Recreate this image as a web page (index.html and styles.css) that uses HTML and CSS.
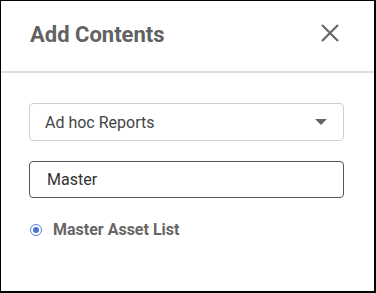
FILE: index.html
```html
<!DOCTYPE html>
<html lang="en">
<head>
    <meta charset="UTF-8">
    <title>Add Contents</title>
    <link rel="stylesheet" href="styles.css">
</head>
<body>
    <div class="dialog">
        <div class="dialog-header">
            <h2 class="dialog-title">Add Contents</h2>
            <button class="close-button" aria-label="Close">
                <svg width="20" height="20" viewBox="0 0 20 20">
                    <path d="M2 2 L18 18 M18 2 L2 18" stroke="#666" stroke-width="2.2" fill="none"/>
                </svg>
            </button>
        </div>
        <div class="dialog-body">
            <div class="select-box">
                <span class="select-text">Ad hoc Reports</span>
                <span class="caret"></span>
            </div>
            <div class="search-box">
                <span class="search-text">Master</span>
            </div>
            <label class="radio-row">
                <span class="radio"><span class="radio-dot"></span></span>
                <span class="radio-label">Master Asset List</span>
            </label>
        </div>
    </div>
</body>
</html>
```

FILE: styles.css
```css
body {
    margin: 0;
    font-family: Roboto, 'Liberation Sans', sans-serif;
    background: #fff;
}

.dialog {
    width: 376px;
    height: 293px;
    box-sizing: border-box;
    border-top: 1px solid #000;
    border-left: 1px solid #000;
    border-right: 2px solid #000;
    border-bottom: 2px solid #000;
    background: #fff;
}

.dialog-header {
    height: 66px;
    display: flex;
    align-items: center;
    justify-content: space-between;
    padding: 0 34px 4px 29px;
    border-bottom: 2px solid #dedede;
}

.dialog-title {
    margin: 0;
    font-size: 22px;
    font-weight: bold;
    color: #626262;
}

.close-button {
    background: none;
    border: none;
    padding: 0;
    width: 20px;
    height: 20px;
    margin-bottom: 3px;
    cursor: pointer;
}

.dialog-body {
    padding: 30px 30px 0 28px;
}

.select-box {
    height: 38px;
    box-sizing: border-box;
    border: 1px solid #cfcfcf;
    border-radius: 4px;
    display: flex;
    align-items: center;
    justify-content: space-between;
    padding: 0 16px 0 15px;
}

.select-text {
    font-size: 16px;
    color: #444;
}

.caret {
    width: 0;
    height: 0;
    border-left: 6px solid transparent;
    border-right: 6px solid transparent;
    border-top: 6px solid #666;
}

.search-box {
    margin-top: 20px;
    height: 37px;
    box-sizing: border-box;
    border: 1px solid #555;
    border-radius: 4px;
    display: flex;
    align-items: center;
    padding: 0 17px;
}

.search-text {
    font-size: 16px;
    color: #333;
}

.radio-row {
    display: flex;
    align-items: center;
    margin-top: 22px;
    padding-left: 1px;
}

.radio {
    width: 10px;
    height: 10px;
    border: 1.5px solid #5b84e0;
    border-radius: 50%;
    display: flex;
    align-items: center;
    justify-content: center;
}

.radio-dot {
    width: 6px;
    height: 6px;
    border-radius: 50%;
    background: #4a74d6;
}

.radio-label {
    margin-left: 11px;
    font-size: 16px;
    font-weight: bold;
    color: #666;
}
```
